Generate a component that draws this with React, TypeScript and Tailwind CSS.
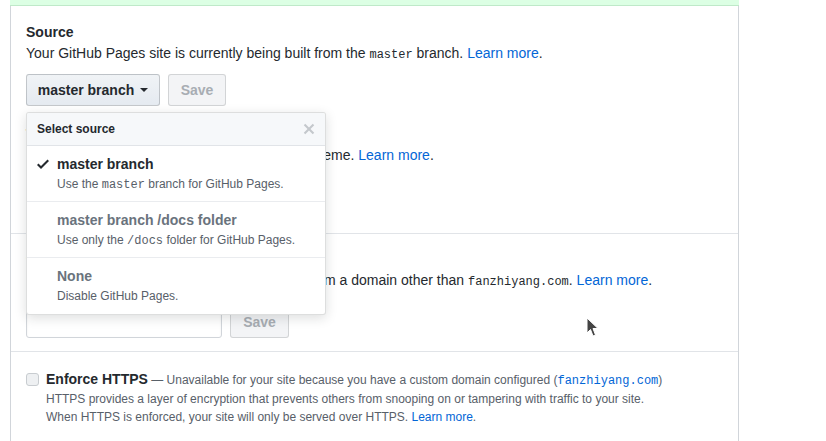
import React from 'react';

const sans = "font-['Liberation_Sans',Arial,sans-serif]";
const mono = "font-['Liberation_Mono','DejaVu_Sans_Mono',monospace]";

const options = [
  { title: 'master branch', desc: ['Use the ', 'master', ' branch for GitHub Pages.'], selected: true },
  { title: 'master branch /docs folder', desc: ['Use only the ', '/docs', ' folder for GitHub Pages.'], selected: false },
  { title: 'None', desc: ['Disable GitHub Pages.', '', ''], selected: false },
];

const CheckIcon = () => (
  <svg width="12" height="16" viewBox="0 0 12 16" className="fill-[#24292e]">
    <path d="M12 5l-8 8-4-4 1.5-1.5L4 10l6.5-6.5L12 5z" />
  </svg>
);

const XIcon = () => (
  <svg width="12" height="16" viewBox="0 0 12 16" className="fill-[#c4c8cc]">
    <path d="M7.48 8l3.75 3.75-1.48 1.48L6 9.48l-3.75 3.75-1.48-1.48L4.52 8 .77 4.25l1.48-1.48L6 6.52l3.75-3.75 1.48 1.48L7.48 8z" />
  </svg>
);

// menu de sélection de la source
const SelectMenu = () => (
  <div className="absolute left-0 top-[38px] z-10 w-[300px] rounded-[3px] border border-[rgba(27,31,35,0.15)] bg-white shadow-[0_3px_12px_rgba(27,31,35,0.15)] overflow-hidden">
    <div className="flex items-center justify-between h-[33px] px-[10px] bg-[#f6f8fa] border-b border-[#e1e4e8]">
      <span className="text-[12px] font-bold text-[#24292e]">Select source</span>
      <XIcon />
    </div>
    {options.map((opt, i) => (
      <div
        key={i}
        className={`flex h-[56px] pl-[10px] pt-[8px] ${i < options.length - 1 ? 'border-b border-[#eaecef]' : ''}`}
      >
        <div className="w-[20px] pt-[2px]">{opt.selected && <CheckIcon />}</div>
        <div>
          <div className={`text-[14px] font-bold leading-[20px] ${opt.selected ? 'text-[#24292e]' : 'text-[#6a737d]'}`}>
            {opt.title}
          </div>
          <div className="text-[12px] leading-[20px] text-[#586069]">
            {opt.desc[0]}
            {opt.desc[1] && <span className={`${mono} text-[12px]`}>{opt.desc[1]}</span>}
            {opt.desc[2]}
          </div>
        </div>
      </div>
    ))}
  </div>
);

export default function App() {
  return (
    <div className={`relative w-[826px] h-[441px] overflow-hidden bg-white text-[#24292e] ${sans}`}>
      <div className="ml-[10px] w-[729px]">
        {/* bandeau vert du message flash */}
        <div className="h-[6px] bg-[#dcffe4] border-b border-[#bfe9c9]" />

        <div className="border-x border-[#d1d5da]">
          {/* Source */}
          <div className="px-[15px] pt-[16px] pb-[18px] border-b border-[#e1e4e8]">
            <h3 className="text-[14px] font-bold leading-[21px]">Source</h3>
            <p className="text-[14px] leading-[20px]">
              Your GitHub Pages site is currently being built from the{' '}
              <span className={`${mono} text-[12px]`}>master</span> branch.{' '}
              <span className="text-[#0366d6]">Learn more</span>.
            </p>

            <div className="relative mt-[9px] flex gap-[8px]">
              <button className="h-[32px] w-[134px] flex items-center justify-center gap-[6px] rounded-[3px] border border-[rgba(27,31,35,0.2)] bg-[linear-gradient(-180deg,#f0f3f6_0%,#e6ebf1_90%)] text-[14px] font-bold text-[#24292e]">
                master branch
                <span className="inline-block w-0 h-0 border-x-[4px] border-x-transparent border-t-[4px] border-t-[#24292e]" />
              </button>
              <button className="h-[32px] w-[58px] rounded-[3px] border border-[rgba(27,31,35,0.15)] bg-[#f3f4f6] text-[14px] font-bold text-[#a8adb3]">
                Save
              </button>
              <SelectMenu />
            </div>

            <h3 className="mt-[18px] text-[14px] font-bold leading-[21px]">Theme chooser</h3>
            <p className="text-[14px] leading-[20px]">
              Select a theme to publish your site with Jekyll theme.{' '}
              <span className="text-[#0366d6]">Learn more</span>.
            </p>
            <button className="mt-[18px] h-[32px] px-[12px] rounded-[3px] border border-[rgba(27,31,35,0.2)] bg-[#eff3f6] text-[14px] font-bold">
              Change theme
            </button>
          </div>

          {/* Custom domain */}
          <div className="px-[15px] pt-[14px] pb-[13px] border-b border-[#e1e4e8]">
            <h3 className="text-[14px] font-bold leading-[21px]">Custom domain</h3>
            <p className="text-[14px] leading-[22px]">
              Custom domains allow you to serve your site from a domain other than{' '}
              <span className={`${mono} text-[12px]`}>fanzhiyang.com</span>.{' '}
              <span className="text-[#0366d6]">Learn more</span>.
            </p>
            <div className="mt-[14px] flex gap-[8px]">
              <div className="h-[31px] w-[196px] rounded-[3px] border border-[#d1d5da] bg-white shadow-[inset_0_1px_2px_rgba(27,31,35,0.075)]" />
              <button className="h-[31px] w-[59px] rounded-[3px] border border-[rgba(27,31,35,0.15)] bg-[#f3f4f6] text-[14px] font-bold text-[#a8adb3]">
                Save
              </button>
            </div>
          </div>

          {/* Enforce HTTPS */}
          <div className="px-[15px] pt-[18px] pb-[20px] flex gap-[7px]">
            <div className="mt-[3px] h-[13px] w-[13px] shrink-0 rounded-[3px] border border-[#c8ccd0] bg-[#eef0f2]" />
            <div className="text-[12px] leading-[18px] text-[#586069]">
              <div>
                <span className="text-[14px] font-bold text-[#24292e]">Enforce HTTPS</span> — Unavailable for your site
                because you have a custom domain configured (
                <span className={`${mono} text-[#0366d6]`}>fanzhiyang.com</span>)
              </div>
              <div>HTTPS provides a layer of encryption that prevents others from snooping on or tampering with traffic to your site.</div>
              <div>
                When HTTPS is enforced, your site will only be served over HTTPS.{' '}
                <span className="text-[#0366d6]">Learn more</span>.
              </div>
            </div>
          </div>
        </div>
      </div>

      {/* pointeur de la souris */}
      <svg className="absolute left-[586px] top-[317px]" width="14" height="22" viewBox="0 0 14 22">
        <path d="M1 1 L1 16 L4.5 12.5 L7 19 L9.5 18 L7 11.5 L12 11.5 Z" fill="#444" stroke="#fff" strokeWidth="1" />
      </svg>
    </div>
  );
}
